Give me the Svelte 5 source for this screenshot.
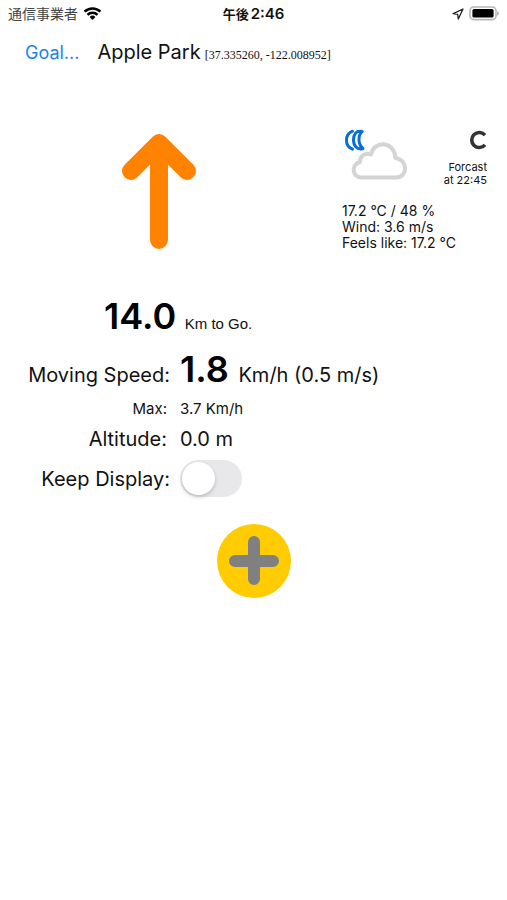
<script>
	let goal = "Apple Park";
	let position = [37.33526, -122.008952];
	let distance = 14;
	let speed = 1.8;
	let speed_ms = 0.5;
	let max_speed = 3.7;
	let altitude = 0;
	let keep_display = false;
	let weather = {
		temp: 17.2,
		humidity: 48,
		wind: 3.6,
		feels: 17.2,
		time: "22:45",
	};
</script>

<header class="status">
	<div class="carrier">
		<span>通信事業者</span>
		<svg width="19" height="14" viewBox="0 0 19 14" aria-label="Wi-Fi">
			<path d="M1.6 4.7a11.2 11.2 0 0 1 15.8 0" />
			<path d="M4.5 7.8a7 7 0 0 1 10 0" />
			<path class="dot" d="M9.500 12.9 6.6 10a4.1 4.1 0 0 1 5.8 0z" />
		</svg>
	</div>
	<div class="clock">午後<b>2:46</b></div>
	<div class="indicators">
		<svg width="12" height="12" viewBox="0 0 12 12" aria-label="Location">
			<path class="locate" d="M11 1 1.2 5.7l4.5.6.6 4.7z" />
		</svg>
		<svg width="30" height="16" viewBox="0 0 30 16" aria-label="Battery">
			<rect class="case" x="1" y="1" width="26" height="12.6" rx="3.6" />
			<rect x="3.4" y="3" width="21.2" height="8.6" rx="1.6" />
			<path class="tip" d="M28 5.2q2 .5 2 2.2t-2 2.2z" />
		</svg>
	</div>
</header>

<nav class="goal">
	<button class="pick">Goal...</button>
	<h1>{goal}</h1>
	<span class="position">[{position[0].toFixed(6)}, {position[1].toFixed(6)}]</span>
</nav>

<main>
	<section class="top">
		<div class="compass">
			<svg width="76" height="116" viewBox="0 0 76 116" aria-label="Direction">
				<path d="M38 107V10M10 38 38 10 66 38" />
			</svg>
		</div>
		<div class="weather">
			<div class="forecast">
				<svg width="66" height="54" viewBox="0 0 66 54" aria-label="Cloudy night">
					<path
						class="moon"
						d="M10.500 3.200C2.500 6.500 2.500 18 10.500 21.200M20.200 3.500C14 2 11.500 6.500 11.500 12 11.500 17.500 15 22.500 21 20.500 16 16.500 15.500 8 20.200 3.500z"
					/>
					<path
						class="cloud"
						d="M20 49.500C9.500 49.500 9 36.500 18 34 17.500 28 23.500 24 29 26.500 31.500 12.500 52 12 53.500 30 66 31.500 66.500 49.500 54 49.500z"
					/>
				</svg>
				<div class="source">
					<button class="reload" aria-label="Reload">
						<svg width="18" height="20" viewBox="0 0 18 20">
							<path d="M16 5.200A7.500 7.500 0 1 0 16 14.800" />
						</svg>
					</button>
					<p>Forcast<br />at {weather.time}</p>
				</div>
			</div>
			<p class="detail">
				{weather.temp} °C / {weather.humidity} %<br />
				Wind: {weather.wind} m/s<br />
				Feels like: {weather.feels} °C
			</p>
		</div>
	</section>

	<p class="distance"><strong>{distance.toFixed(1)}</strong> <small>Km to Go.</small></p>

	<div class="readout">
		<span class="label wide">Moving Speed:</span>
		<span class="speed"><strong>{speed}</strong> Km/h ({speed_ms} m/s)</span>
		<span class="label small">Max:</span>
		<span class="small">{max_speed} Km/h</span>
		<span class="label">Altitude:</span>
		<span class="altitude">{altitude.toFixed(1)} m</span>
		<label class="label wide" for="keep">Keep Display:</label>
		<input id="keep" class="toggle" type="checkbox" role="switch" bind:checked={keep_display} />
	</div>

	<button class="add" aria-label="Add">
		<svg width="74" height="74" viewBox="0 0 74 74">
			<path d="M37 18V55M18 37H56" />
		</svg>
	</button>
</main>

<style>
	:global(body) {
		background: #fff;
		color: #111;
		font-family: Inter, "Noto Sans CJK JP", sans-serif;
	}
	button {
		padding: 0;
		border: none;
		background: none;
		font: inherit;
		cursor: pointer;
	}
	h1,
	p {
		margin: 0;
		font-weight: normal;
	}
	svg {
		display: block;
		fill: none;
		stroke-linecap: round;
		stroke-linejoin: round;
	}
	strong {
		color: #000;
		font-size: 36px;
		font-weight: 600;
	}
	.status {
		display: grid;
		grid-template-columns: 1fr auto 1fr;
		align-items: center;
		height: 28px;
		padding: 0 8px;
		font-size: 14px;
		line-height: 20px;
	}
	.carrier {
		display: flex;
		align-items: center;
		gap: 5px;
		color: #444;
	}
	.carrier path {
		stroke: #000;
		stroke-width: 2.6;
		stroke-linecap: butt;
	}
	.carrier .dot {
		fill: #000;
		stroke: none;
	}
	.clock {
		font-weight: 700;
		font-size: 13px;
	}
	.clock b {
		margin-left: 2px;
		font-size: 15px;
		font-weight: 600;
	}
	.indicators {
		display: flex;
		justify-content: flex-end;
		align-items: center;
		gap: 5px;
	}
	.indicators .locate {
		stroke: #222;
		stroke-width: 1.3;
	}
	.indicators rect {
		fill: #000;
	}
	.indicators .case {
		fill: #fff;
		stroke: #b8b8b8;
		stroke-width: 1.6;
	}
	.indicators .tip {
		fill: #b8b8b8;
	}
	.goal {
		display: flex;
		align-items: baseline;
		padding: 12px 25px 0;
		line-height: 24px;
	}
	.pick {
		margin-right: 18px;
		color: #1684f0;
		font-size: 18px;
	}
	h1 {
		margin-right: 4px;
		font-size: 20px;
	}
	.position {
		font-family: "Liberation Serif", serif;
		font-size: 12px;
	}
	.top {
		display: flex;
		gap: 25px;
		padding: 61px 20px 0 0;
	}
	.compass {
		flex: 1;
		display: flex;
		justify-content: center;
		padding-top: 5px;
	}
	.compass path {
		stroke: #ff8200;
		stroke-width: 18;
	}
	.weather {
		width: 145px;
	}
	.forecast {
		display: flex;
		justify-content: space-between;
	}
	.moon {
		stroke: #0a6fd0;
		stroke-width: 3;
	}
	.cloud {
		stroke: #d4d4d4;
		stroke-width: 4;
	}
	.source {
		display: flex;
		flex-direction: column;
		align-items: flex-end;
		padding-top: 2px;
		font-size: 11px;
		line-height: 13px;
		text-align: right;
	}
	.reload {
		margin-bottom: 11px;
	}
	.reload path {
		stroke: #333;
		stroke-width: 3.6;
		stroke-linecap: butt;
	}
	.detail {
		margin-top: 16px;
		font-size: 14px;
		line-height: 16px;
		white-space: nowrap;
	}
	.distance {
		padding: 43px 0 4px 104px;
		line-height: 44px;
	}
	.distance small {
		margin-left: 4px;
		font-family: "Liberation Sans", sans-serif;
		font-size: 15px;
	}
	.readout {
		display: grid;
		grid-template-columns: 170px 1fr;
		column-gap: 10px;
		align-items: baseline;
		font-size: 20px;
		line-height: 32px;
	}
	.label {
		padding-right: 3px;
		text-align: right;
	}
	.wide {
		padding-right: 0;
	}
	.speed {
		line-height: 39px;
	}
	.speed strong {
		margin-right: 4px;
	}
	.readout .small {
		font-size: 15px;
		line-height: 28px;
	}
	.readout .toggle {
		align-self: center;
		appearance: none;
		width: 62px;
		height: 37px;
		margin: 5px 0;
		padding: 2px;
		box-sizing: border-box;
		border-radius: 19px;
		background: #e8e8ea;
	}
	.toggle::before {
		content: "";
		display: block;
		width: 33px;
		height: 33px;
		border-radius: 50%;
		background: #fff;
		box-shadow: 0 2px 4px #0003;
	}
	.toggle:checked {
		background: #34c759;
	}
	.toggle:checked::before {
		margin-left: auto;
	}
	.readout label {
		align-self: center;
	}
	.add {
		display: block;
		margin: 22px auto;
		border-radius: 50%;
		background: #ffcc02;
	}
	.add path {
		stroke: #808080;
		stroke-width: 12;
	}
</style>
